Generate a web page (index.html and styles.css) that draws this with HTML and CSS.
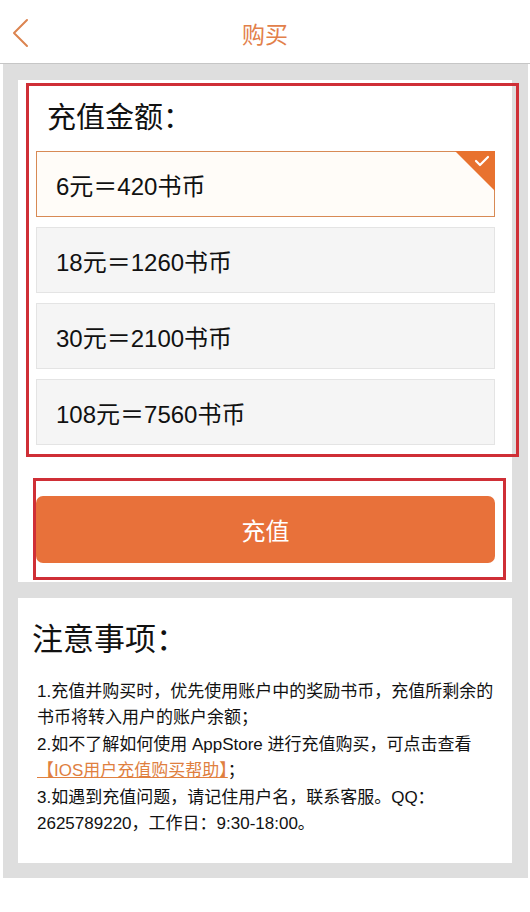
FILE: index.html
```html
<!DOCTYPE html>
<html lang="zh-CN">
<head>
    <meta charset="UTF-8">
    <meta name="viewport" content="width=device-width, initial-scale=1.0">
    <title>购买</title>
    <link rel="stylesheet" href="styles.css">
</head>
<body>
    <header class="topbar">
        <a class="back" href="#">
            <svg width="20" height="30" viewBox="0 0 20 30">
                <polyline points="15,2 2,15 15,28" fill="none" stroke="#dc8450" stroke-width="2" stroke-linecap="round" stroke-linejoin="round"/>
            </svg>
        </a>
        <h1>购买</h1>
        <span></span>
    </header>

    <main class="content">
        <section class="card">
            <div class="pick-box">
                <h2 class="pick-title">充值金额：</h2>
                <ul class="options">
                    <li class="option active">
                        6元＝420书币
                        <svg class="corner" width="40" height="40" viewBox="0 0 40 40">
                            <polygon points="0,0 40,0 40,40" fill="#e8722f"/>
                            <polyline points="21,10 25,14 33,6" fill="none" stroke="#fff" stroke-width="2.2" stroke-linecap="round" stroke-linejoin="round"/>
                        </svg>
                    </li>
                    <li class="option">18元＝1260书币</li>
                    <li class="option">30元＝2100书币</li>
                    <li class="option">108元＝7560书币</li>
                </ul>
            </div>
            <div class="btn-box">
                <button class="pay-btn" type="button">充值</button>
            </div>
        </section>

        <section class="card notice">
            <h2>注意事项：</h2>
            <p>1.充值并购买时，优先使用账户中的奖励书币，充值所剩余的书币将转入用户的账户余额；</p>
            <p>2.如不了解如何使用 AppStore 进行充值购买，可点击查看<br><a href="#">【IOS用户充值购买帮助】</a>；</p>
            <p>3.如遇到充值问题，请记住用户名，联系客服。QQ：2625789220，工作日：9:30-18:00。</p>
        </section>
    </main>

    <footer class="bottom"></footer>
</body>
</html>
```

FILE: styles.css
```css
* {
    box-sizing: border-box;
}
body {
    margin: 0;
    font-family: "Liberation Sans", "Noto Sans CJK SC", sans-serif;
    color: #111;
    background-color: #fff;
}
.topbar {
    height: 64px;
    display: grid;
    grid-template-columns: 1fr auto 1fr;
    align-items: center;
    padding-top: 2px;
    border-bottom: 1px solid #c6c6c6;
    background-color: #fff;
}
.back {
    justify-self: start;
    display: flex;
    padding-left: 12px;
}
.topbar h1 {
    margin: 0;
    font-size: 23px;
    font-weight: normal;
    color: #e2804a;
}
.content {
    margin: 0 2px 0 3px;
    padding: 16px 16px 15px 15px;
    background-color: #dedede;
    display: flex;
    flex-direction: column;
    gap: 16px;
}
.card {
    background-color: #fff;
}
.pick-box {
    margin: 3px -7px 0 8px;
    padding: 0 21px 9px 7px;
    border: 3px solid #cf2f36;
}
.pick-title {
    margin: 0;
    padding: 12px 0 13px 11px;
    font-size: 29px;
    line-height: 40px;
    font-weight: normal;
}
.options {
    list-style: none;
    margin: 0;
    padding: 0;
    display: flex;
    flex-direction: column;
    gap: 10px;
}
.option {
    position: relative;
    height: 66px;
    display: flex;
    align-items: center;
    padding-left: 19px;
    font-size: 24px;
    background-color: #f5f5f5;
    border: 1px solid #e4e4e4;
}
.option.active {
    background-color: #fffcf8;
    border-color: #d88a55;
}
.corner {
    position: absolute;
    top: -1px;
    right: -1px;
}
.btn-box {
    margin: 21px 6px 2px 15px;
    padding: 15px 8px 14px 0;
    border: 3px solid #cf2f36;
}
.pay-btn {
    display: block;
    width: 100%;
    height: 67px;
    border: none;
    border-radius: 7px;
    background-color: #e8713a;
    color: #fff;
    font-family: inherit;
    font-size: 24px;
    cursor: pointer;
}
.notice {
    padding: 22px 14px 26px 14px;
}
.notice h2 {
    margin: 0 0 19px;
    font-size: 31px;
    line-height: 40px;
    font-weight: normal;
}
.notice p {
    margin: 0;
    padding-left: 5px;
    font-size: 17px;
    line-height: 26.4px;
}
.notice a {
    color: #e0803f;
}
.bottom {
    height: 34px;
}
```
